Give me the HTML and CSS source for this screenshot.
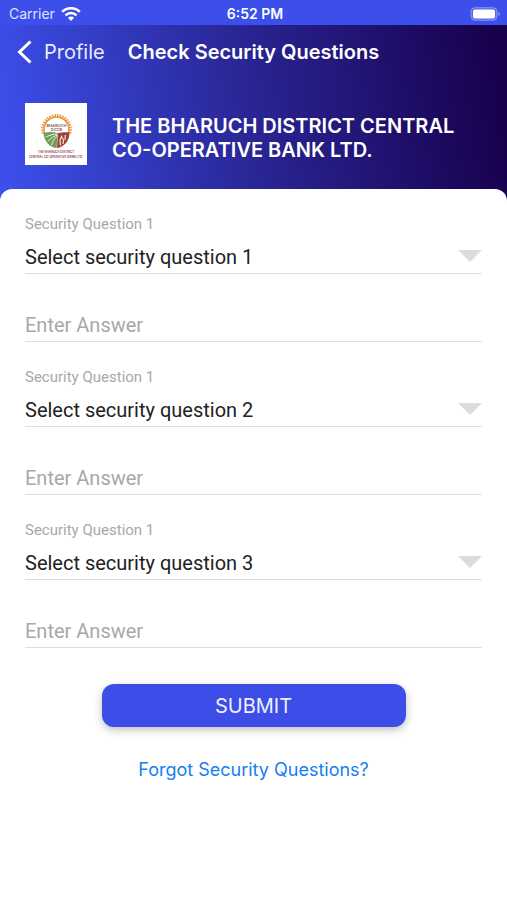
FILE: index.html
```
<!DOCTYPE html>
<html lang="en">

<head>
    <meta charset="UTF-8">
    <meta name="viewport" content="width=device-width, initial-scale=1.0">
    <title>Check Security Questions</title>
    <link rel="stylesheet" href="styles.css">
</head>

<body>
    <div class="status">
        <div class="carrier">
            <span>Carrier</span>
            <svg width="20" height="14" viewBox="0 0 20 14" fill="none" stroke="#fff" stroke-width="2.6">
                <path d="M1.2 4.9a12.4 12.4 0 0 1 17.6 0" />
                <path d="M4.5 8.3a7.8 7.8 0 0 1 11 0" />
                <path d="M10 14l-3-3.2a4.2 4.2 0 0 1 6 0z" fill="#fff" stroke="none" />
            </svg>
        </div>
        <span class="time">6:52 PM</span>
        <svg class="battery" width="31" height="14" viewBox="0 0 31 14">
            <rect x="1" y="0.7" width="26" height="12.6" rx="3.8" fill="#fff" fill-opacity="0.15" stroke="#fff" stroke-opacity="0.35" />
            <rect x="3" y="2.5" width="22" height="9" rx="2" fill="#fff" />
            <path d="M28.4 4.8c2 .8 2 3.6 0 4.4z" fill="#fff" fill-opacity="0.4" />
        </svg>
    </div>

    <header class="header">
        <nav class="nav">
            <a href="#" class="back">
                <svg width="16" height="24" viewBox="0 0 16 24" fill="none" stroke="#fff" stroke-width="3">
                    <path d="M14.5 1.5L3.5 12l11 10.5" />
                </svg>
                <span>Profile</span>
            </a>
            <h1 class="title">Check Security Questions</h1>
        </nav>
        <div class="bank">
            <svg class="logo" width="62" height="62" viewBox="0 0 62 62" role="img" aria-label="The Bharuch District Central Co-operative Bank Ltd.">
                <rect width="62" height="62" fill="#fff" />
                <!-- sun -->
                <path d="M18.3 30.500a13.8 13.8 0 1 1 26.4 0" fill="none" stroke="#f0a04b" stroke-width="3.2" stroke-dasharray="1.6 1" />
                <path d="M19.5 30a12.5 12.5 0 1 1 24 0" fill="none" stroke="#ee9540" stroke-width="1.6" />
                <text x="31.5" y="23.5" class="logo-name">BHARUCH</text>
                <text x="31.5" y="27.5" class="logo-name">DCCB</text>
                <!-- fields and figures -->
                <path d="M18.5 30c5-1.5 10-1.2 14.500 0l-1.500 15c-7-.5-12.500-7-13-15z" fill="#6f9f57" />
                <path d="M20.5 34c5-2 8-3 12-3M23 38.5c3-4 6-5.5 10-6.5M26.5 42c1-4 3-7 6.5-9" fill="none" stroke="#e6efd9" stroke-width="1" />
                <path d="M33 30c4-1 7-1 11.500-.5 0 8-5 14.500-12.500 15.500z" fill="#a43f36" />
                <path d="M35.5 42.5l-.5-5 1.5-4 2 3.5-.5 4M40 37l.3-5" fill="none" stroke="#f5e3df" stroke-width="1.2" />
                <text x="31" y="49.5" class="logo-text">THE BHARUCH DISTRICT</text>
                <text x="31" y="54.5" class="logo-text">CENTRAL CO-OPERATIVE BANK LTD.</text>
            </svg>
            <h2 class="bank-name">THE BHARUCH DISTRICT CENTRAL CO-OPERATIVE BANK LTD.</h2>
        </div>
    </header>

    <main class="card">
        <form class="form">
            <div class="group">
                <label for="question1">Security Question 1</label>
                <div class="select">
                    <select id="question1">
                        <option>Select security question 1</option>
                    </select>
                </div>
                <input type="text" placeholder="Enter Answer" aria-label="Enter Answer">
            </div>
            <div class="group">
                <label for="question2">Security Question 1</label>
                <div class="select">
                    <select id="question2">
                        <option>Select security question 2</option>
                    </select>
                </div>
                <input type="text" placeholder="Enter Answer" aria-label="Enter Answer">
            </div>
            <div class="group">
                <label for="question3">Security Question 1</label>
                <div class="select">
                    <select id="question3">
                        <option>Select security question 3</option>
                    </select>
                </div>
                <input type="text" placeholder="Enter Answer" aria-label="Enter Answer">
            </div>
            <button type="submit" class="submit">SUBMIT</button>
            <a href="#" class="forgot">Forgot Security Questions?</a>
        </form>
    </main>
</body>

</html>
```
FILE: styles.css
```
* {
    margin: 0;
    padding: 0;
    box-sizing: border-box;
}

body {
    min-height: 100vh;
    display: flex;
    flex-direction: column;
    font-family: Inter, "Liberation Sans", sans-serif;
    background-color: #fff;
}

a {
    text-decoration: none;
}

.status {
    display: grid;
    grid-template-columns: 1fr auto 1fr;
    align-items: center;
    height: 25px;
    padding: 2px 6px 0 9px;
    background-color: #3c4fea;
    color: #fff;
    font-size: 14px;
}

.carrier {
    display: flex;
    align-items: center;
    gap: 6px;
    color: #dfe3ff;
}

.time {
    font-weight: 600;
}

.battery {
    justify-self: end;
}

.header {
    padding-bottom: 36px;
    background: linear-gradient(82deg, #3c4fea 2%, #2a2798 47%, #18004d 97%);
    color: #fff;
}

.nav {
    display: grid;
    grid-template-columns: 1fr auto 1fr;
    align-items: center;
    height: 54px;
    padding: 0 16px;
}

.back {
    display: flex;
    align-items: center;
    gap: 12px;
    color: #e9ebff;
    font-size: 20px;
}

.title {
    font-size: 20px;
    font-weight: 600;
}

.bank {
    display: flex;
    align-items: center;
    gap: 25px;
    padding: 24px 25px 0;
}

.logo {
    flex: none;
}

.logo-name,
.logo-text {
    font-weight: 600;
    text-anchor: middle;
}

.logo-name {
    font-size: 4px;
    fill: #8a5a50;
}

.logo-text {
    font-size: 3px;
    fill: #8c2f3c;
}

.bank-name {
    padding-top: 8px;
    font-size: 20px;
    font-weight: 600;
    line-height: 24px;
}

.card {
    flex: 1;
    margin-top: -12px;
    padding: 25px;
    border-radius: 12px 12px 0 0;
    background-color: #fff;
}

.form {
    display: flex;
    flex-direction: column;
}

.group {
    display: flex;
    flex-direction: column;
    margin-bottom: 25px;
    font-family: Roboto, "Liberation Sans", sans-serif;
}

.group label {
    margin-bottom: 6px;
    color: #a8a8a8;
    font-size: 15px;
    line-height: 20px;
}

.select {
    position: relative;
    margin-bottom: 34px;
}

/* dropdown arrow */
.select::after {
    content: "";
    position: absolute;
    top: 10px;
    right: 0;
    border: 12px solid transparent;
    border-top-color: #dddbdb;
    border-bottom: 0;
    pointer-events: none;
}

.group select,
.group input {
    display: block;
    width: 100%;
    height: 34px;
    border: 0;
    border-bottom: 1px solid #dedede;
    border-radius: 0;
    outline: none;
    appearance: none;
    background: none;
    color: #222;
    font-family: inherit;
    font-size: 20px;
}

.group input::placeholder {
    color: #a8a8a8;
}

.submit {
    align-self: center;
    width: 100%;
    max-width: 304px;
    height: 43px;
    margin: 11px 0 30px;
    border: 0;
    border-radius: 12px;
    background-color: #3c4de8;
    box-shadow: 0 3px 8px rgba(0, 0, 0, 0.25);
    color: #eef0ff;
    font-family: inherit;
    font-size: 20px;
}

.forgot {
    align-self: center;
    color: #1580f0;
    font-size: 18px;
    line-height: 26px;
}
```
